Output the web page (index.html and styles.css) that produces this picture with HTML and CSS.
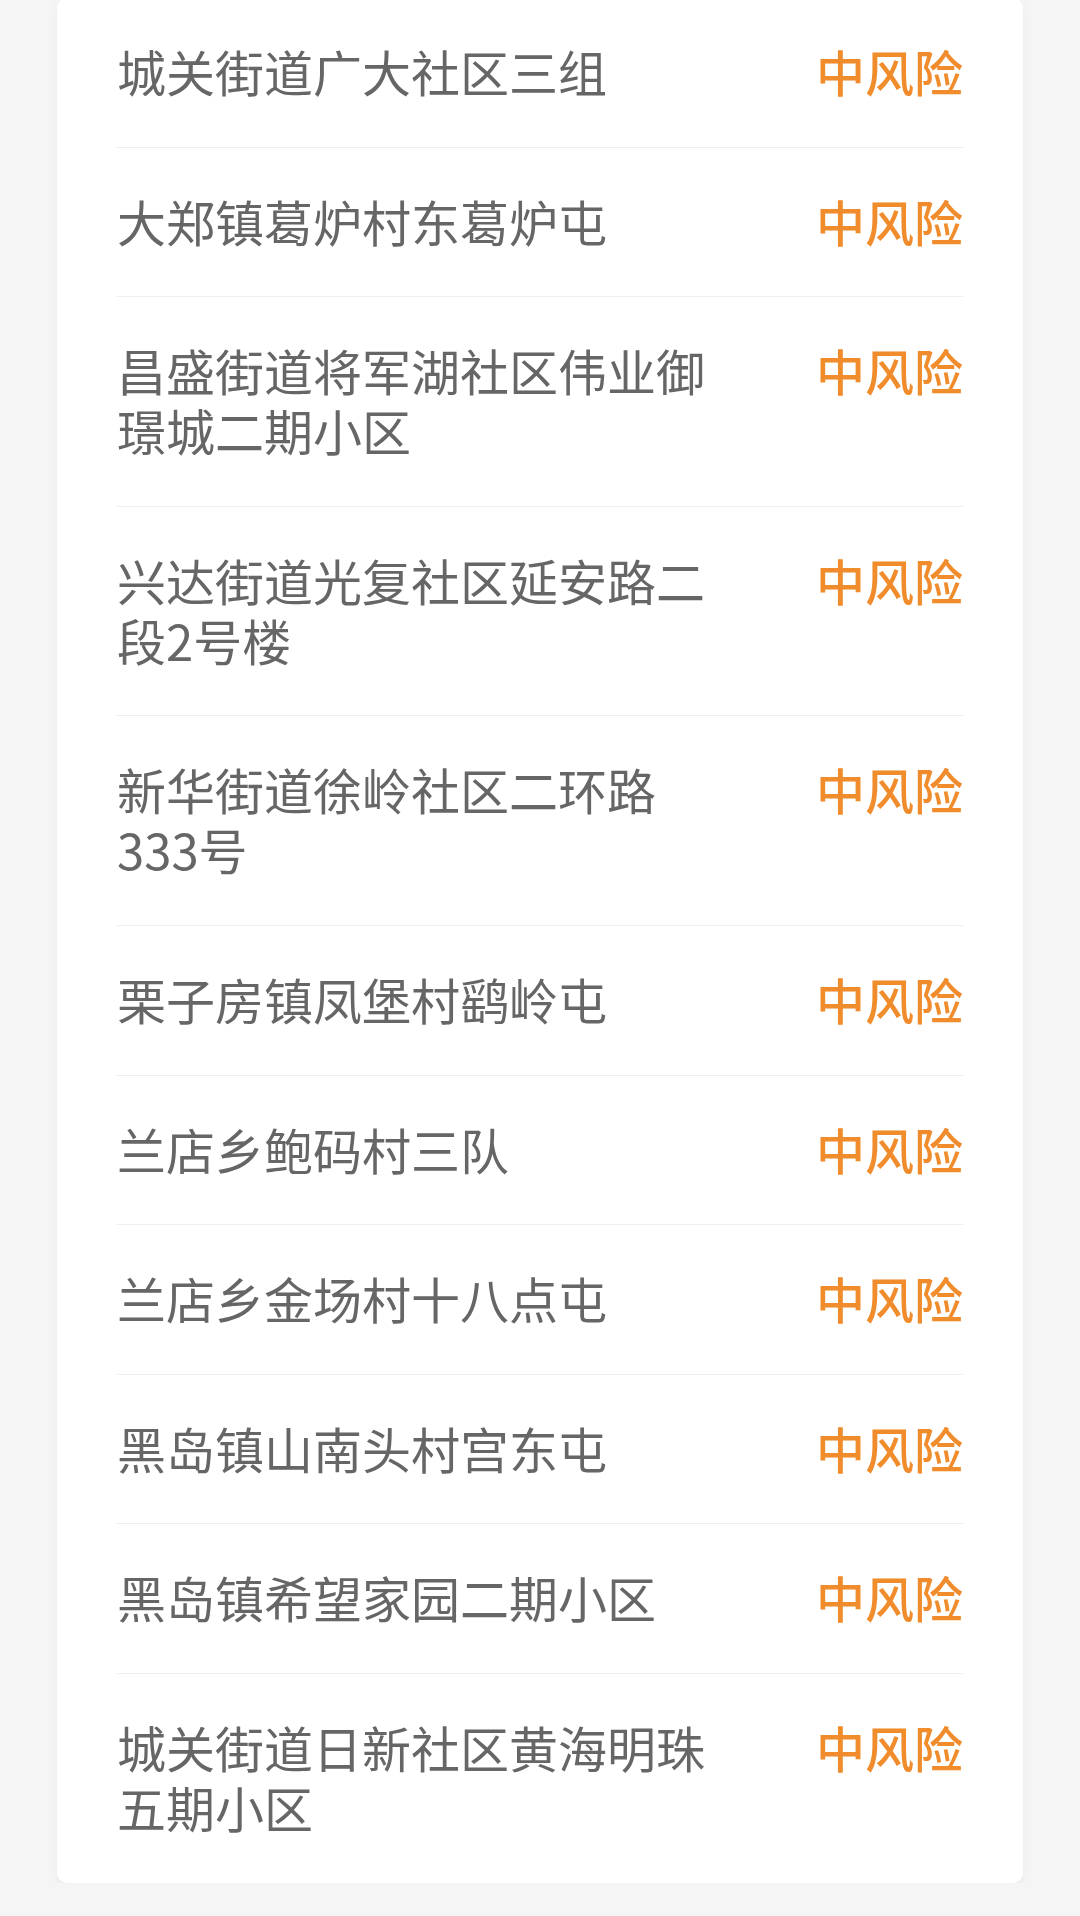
FILE: index.html
```html
<!DOCTYPE html>
<html lang="zh-CN">
<head>
    <meta charset="UTF-8">
    <meta name="viewport" content="width=device-width, initial-scale=1.0">
    <title>中风险地区</title>
    <link rel="stylesheet" href="styles.css">
</head>
<body>
    <div class="card">
        <ul class="area-list">
            <li class="area-row"><span class="area-name">城关街道广大社区三组</span><span class="risk">中风险</span></li>
            <li class="area-row"><span class="area-name">大郑镇葛炉村东葛炉屯</span><span class="risk">中风险</span></li>
            <li class="area-row"><span class="area-name">昌盛街道将军湖社区伟业御璟城二期小区</span><span class="risk">中风险</span></li>
            <li class="area-row"><span class="area-name">兴达街道光复社区延安路二段2号楼</span><span class="risk">中风险</span></li>
            <li class="area-row"><span class="area-name">新华街道徐岭社区二环路333号</span><span class="risk">中风险</span></li>
            <li class="area-row"><span class="area-name">栗子房镇凤堡村鹞岭屯</span><span class="risk">中风险</span></li>
            <li class="area-row"><span class="area-name">兰店乡鲍码村三队</span><span class="risk">中风险</span></li>
            <li class="area-row"><span class="area-name">兰店乡金场村十八点屯</span><span class="risk">中风险</span></li>
            <li class="area-row"><span class="area-name">黑岛镇山南头村宫东屯</span><span class="risk">中风险</span></li>
            <li class="area-row"><span class="area-name">黑岛镇希望家园二期小区</span><span class="risk">中风险</span></li>
            <li class="area-row"><span class="area-name">城关街道日新社区黄海明珠五期小区</span><span class="risk">中风险</span></li>
        </ul>
    </div>
</body>
</html>
```

FILE: styles.css
```css
body {
    font-family: "Noto Sans CJK SC", "Noto Sans", sans-serif;
    background-color: #f5f5f5;
    margin: 0;
    padding: 0;
}
.card {
    width: 966px;
    margin: -2px 0 0 57px;
    padding: 0 60px;
    box-sizing: border-box;
    background-color: white;
    border-radius: 10px;
    box-shadow: 0 4px 10px rgba(0, 0, 0, 0.05);
}
.area-list {
    list-style: none;
    margin: 0;
    padding: 0;
}
.area-row {
    display: flex;
    justify-content: space-between;
    align-items: flex-start;
    padding: 43px 0 45.6px;
    border-bottom: 1px solid #efefef;
    font-size: 49px;
    line-height: 60px;
}
.area-row:last-child {
    border-bottom: none;
}
.area-name {
    max-width: 600px;
    color: #666666;
}
.risk {
    color: #f08c2c;
    font-weight: 500;
}
```
